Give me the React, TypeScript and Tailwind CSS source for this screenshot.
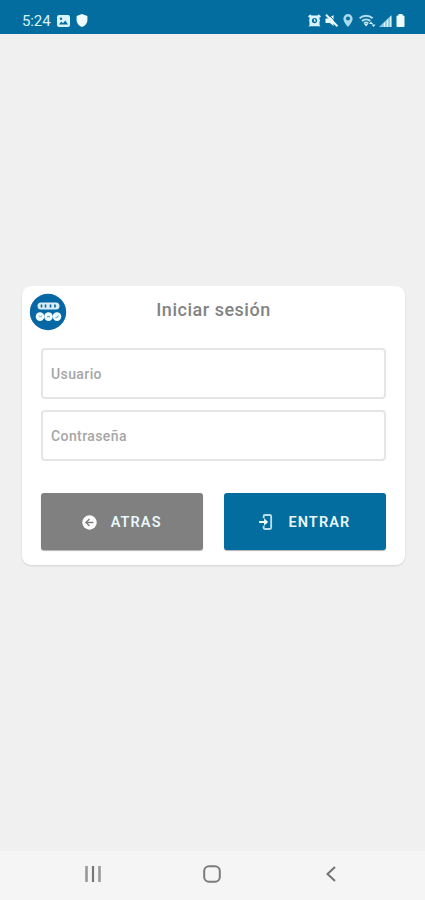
import React from "react";

function StatusBar() {
  return (
    <header className="flex h-[34px] shrink-0 items-center justify-between bg-[#036d9f] pt-[7px] pr-[20px] pl-[22px] text-[#d9f3fb]">
      <div className="flex items-center">
        <span className="w-[29px] text-[15px] leading-4 tracking-[-0.1px]">5:24</span>
        <svg className="ml-[6px]" width="13" height="12" viewBox="0 0 13 12">
          <path fillRule="evenodd" fill="currentColor" d="M2 0h9a2 2 0 0 1 2 2v8a2 2 0 0 1-2 2H2a2 2 0 0 1-2-2V2a2 2 0 0 1 2-2Zm0 9.5h9L8.3 5.6 6 8.2 4.4 6.5ZM4 2.5a1.2 1.2 0 1 0 0 2.4 1.2 1.2 0 0 0 0-2.4Z" />
        </svg>
        <svg className="ml-[6px]" width="12" height="13" viewBox="0 0 12 13">
          <path fill="#effcff" d="M6 0 11.4 2v4.5c0 3-2.5 5.300-5.400 6.500C3.100 11.800.6 9.500.6 6.500V2Z" />
        </svg>
      </div>
      <div className="flex items-center">
        <svg width="13" height="13" viewBox="0 0 13 13">
          <path fill="none" stroke="currentColor" strokeWidth="1.600" d="M.5 2.800 3 1M12.500 2.800 10 1" />
          <path fillRule="evenodd" fill="currentColor" d="M1.500 1.500h10V5l.5 1.500-.5 1.500v3l1 1.500-2-.3h-8l-2 .3 1-1.500V8L1 6.500 1.500 5Zm5 2.500a2.600 2.600 0 1 0 0 5.200 2.600 2.600 0 0 0 0-5.200Z" />
          <path stroke="currentColor" strokeWidth="1.200" fill="none" d="M6.500 5v2h1.500" />
        </svg>
        <svg className="ml-[4px]" width="14" height="13" viewBox="0 0 14 13">
          <path fill="#effcff" d="M.5 4.500h3L8.500 1v11L5 9H.5Z" />
          <path fill="none" stroke="#036d9f" strokeWidth="1" d="m3.500.5 10 10.500" />
          <path fill="none" stroke="#effcff" strokeWidth="2" d="m1 .8 11.500 11.500" />
        </svg>
        <svg className="ml-[4px]" width="10" height="13" viewBox="0 0 10 13">
          <path fillRule="evenodd" fill="#a9d9ed" d="M5 0a4.600 4.600 0 0 1 4.600 4.700C9.600 8 5 13 5 13S.4 8 .4 4.700A4.600 4.600 0 0 1 5 0Zm0 2.500a2 2 0 1 0 0 4 2 2 0 0 0 0-4Z" />
        </svg>
        <svg className="ml-[6px]" width="17" height="13" viewBox="0 0 17 13">
          <path fill="none" stroke="#b4dfef" strokeWidth="2" d="M.6 4.200a9.600 9.600 0 0 1 13 0M3 7a6.200 6.200 0 0 1 8.300 0M5 9.400a3.300 3.300 0 0 1 4.300 0" />
          <path fill="currentColor" d="m7.100 12.500-2-2.600h4ZM10 10l2-2.500 2 2.500ZM12.500 10.500h4l-2 2.500Z" />
        </svg>
        <svg className="ml-[3px]" width="13" height="12" viewBox="0 0 13 12">
          <path fill="#8fc9df" d="M0 12 12.500 0v12Z" />
          <path stroke="#d9f3fb" strokeWidth="1.300" d="M5.500 12V7.500M8.500 12V4.500M11.700 12V1.500" />
        </svg>
        <svg className="ml-[4px]" width="9" height="13" viewBox="0 0 9 13">
          <path fill="#effcff" d="M2.500 0h4v1.500h1a1 1 0 0 1 1 1V12a1 1 0 0 1-1 1h-6a1 1 0 0 1-1-1V2.500a1 1 0 0 1 1-1h1Z" />
        </svg>
      </div>
    </header>
  );
}

function Logo() {
  return (
    <svg className="mt-[7px] ml-[7.5px] shrink-0" width="38" height="38" viewBox="0 0 38 38">
      <circle cx="19" cy="19" r="18.200" fill="#0567a4" />
      <rect x="8.500" y="9.500" width="22" height="7" rx="3.500" fill="#d7eef7" />
      <path stroke="#0567a4" strokeWidth="1.600" fill="none" d="M12.500 11.500v3M16.500 11.500v3M21.500 11.500v3M26 11.500v3" />
      <g fill="#effcff">
        <circle cx="11" cy="23.600" r="4.300" />
        <circle cx="19.500" cy="23.600" r="4.300" />
        <circle cx="28" cy="23.600" r="4.300" />
      </g>
      <g stroke="#4b98c3" strokeWidth="1" fill="none">
        <path d="m10 22.600 1.500 1.500 1.500-1.500M18 23.600h3M26.500 24l1 1 2-2.500" />
      </g>
    </svg>
  );
}

const fieldClass =
  "block h-[51px] w-full rounded-[4px] border-2 border-[#e5e5e5] bg-white px-[8.5px] pt-px text-[14px] font-medium tracking-[0.4px] text-[#777] outline-none placeholder:text-[#a6a6a6]";
const buttonClass =
  "flex h-[57px] flex-1 items-center justify-center rounded-[3px] pt-px text-[14.5px] font-semibold tracking-[1.1px] text-[#e9f7fb] shadow-[0_1px_1px_rgba(0,0,0,0.3)]";

export default function App() {
  return (
    <div className="flex h-[900px] w-full flex-col overflow-hidden bg-[#f0f0f0] font-['Roboto',sans-serif]">
      <StatusBar />
      <main className="flex-1 pt-[252px] pr-[20px] pl-[21.5px]">
        <form className="h-[279px] rounded-[9px] bg-white shadow-[0_1px_2px_rgba(0,0,0,0.12)]" onSubmit={(e) => e.preventDefault()}>
          <div className="flex h-[62px] items-start">
            <Logo />
            <h1 className="mt-[12px] mr-[45px] flex-1 text-center text-[18px] leading-6 font-medium tracking-[0.52px] text-[#838383]">
              Iniciar sesión
            </h1>
          </div>
          <div className="flex flex-col gap-[11px] px-[19px]">
            <input className={fieldClass} placeholder="Usuario" aria-label="Usuario" />
            <input className={fieldClass} type="password" placeholder="Contraseña" aria-label="Contraseña" />
          </div>
          <div className="mt-[32px] flex gap-[21px] px-[19px]">
            <button type="button" className={`${buttonClass} bg-[#808080]`}>
              <svg className="mr-[14px]" width="15" height="15" viewBox="0 0 15 15">
                <circle cx="7.500" cy="7.500" r="7.200" fill="#fff" />
                <path fill="none" stroke="#808080" strokeWidth="1.500" d="M11.500 7.500h-7M7.500 4 4 7.500 7.500 11" />
              </svg>
              <span className="pt-[2px]">ATRAS</span>
            </button>
            <button type="submit" className={`${buttonClass} bg-[#036d9f]`}>
              <svg className="mr-[15px]" width="14" height="16" viewBox="0 0 15 17">
                <path fill="none" stroke="#b9dfed" strokeWidth="2" d="M5 4.500V2.300C5 1.500 5.500 1 6.300 1h5.400c.8 0 1.300.5 1.300 1.300v12.400c0 .8-.5 1.300-1.300 1.300H6.300C5.500 16 5 15.500 5 14.700v-2.200" />
                <path fill="none" stroke="#effcff" strokeWidth="2.200" d="M0 8.500h8" />
                <path fill="#effcff" d="m5.500 4.500 4.300 4-4.300 4Z" />
              </svg>
              <span className="pt-[2px]">ENTRAR</span>
            </button>
          </div>
        </form>
      </main>
      <nav className="grid h-[49px] shrink-0 grid-cols-[185px_53px_186px] items-center bg-[#f5f5f5] pb-[3px]">
        <button aria-label="Recientes" className="flex justify-center">
          <svg width="18" height="16" viewBox="0 0 18 16">
            <path stroke="#999" strokeWidth="2.600" d="M2.500 0v16M15.500 0v16" />
            <path stroke="#777" strokeWidth="2.200" d="M9 0v16" />
          </svg>
        </button>
        <button aria-label="Inicio" className="flex justify-center">
          <svg width="18" height="18" viewBox="0 0 18 18">
            <rect x="1.200" y="1.200" width="15.600" height="15.600" rx="4.800" fill="none" stroke="#7b7b7b" strokeWidth="2" />
          </svg>
        </button>
        <button aria-label="Volver" className="flex justify-center">
          <svg width="10" height="16" viewBox="0 0 10 16">
            <path fill="none" stroke="#727272" strokeWidth="2" d="M9 1 1.500 8 9 15" />
          </svg>
        </button>
      </nav>
    </div>
  );
}
